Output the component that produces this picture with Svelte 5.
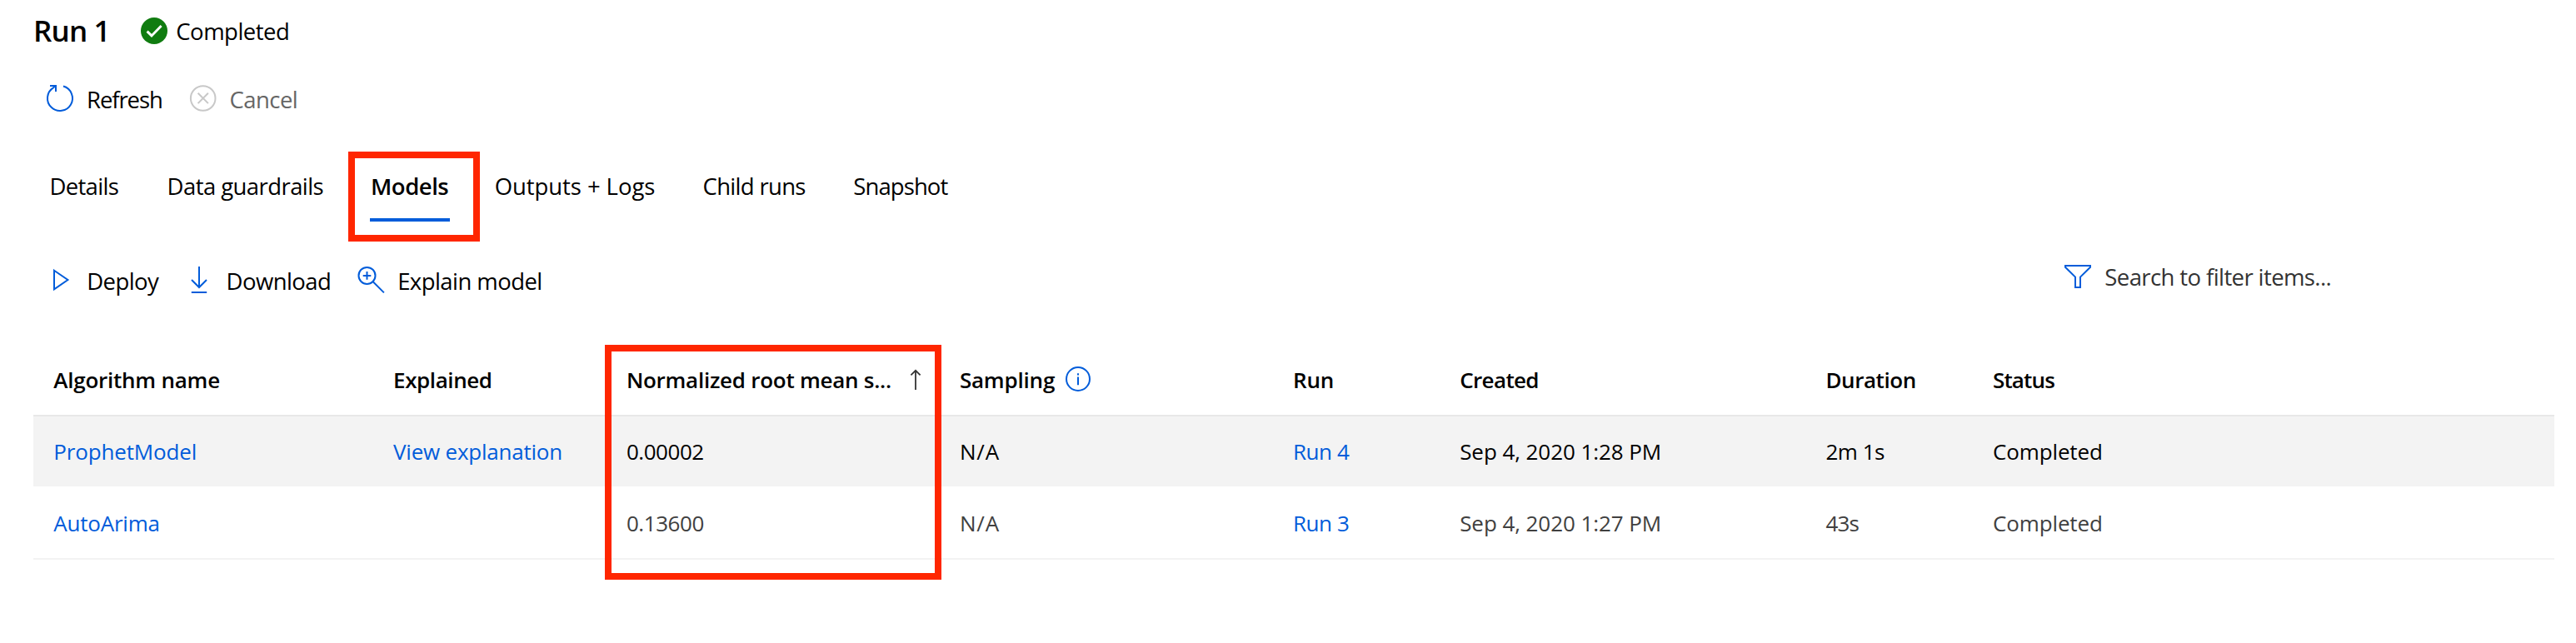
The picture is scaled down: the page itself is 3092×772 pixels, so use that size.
<script>
  const tabs = [
    { label: 'Details', ls: -0.68 },
    { label: 'Data guardrails', ls: -0.57 },
    { label: 'Models', ls: -0.47, active: true },
    { label: 'Outputs + Logs', ls: -0.07 },
    { label: 'Child runs', ls: -0.69 },
    { label: 'Snapshot', ls: -0.92 }
  ];

  const columns = [
    { label: 'Algorithm name', ls: -0.24 },
    { label: 'Explained', ls: -0.42 },
    { label: 'Normalized root mean s...', ls: -0.26, sorted: true },
    { label: 'Sampling', ls: -0.2, info: true },
    { label: 'Run', ls: -0.11 },
    { label: 'Created', ls: -0.64 },
    { label: 'Duration', ls: -0.44 },
    { label: 'Status', ls: -0.85 }
  ];

  const rows = [
    {
      selected: true,
      cells: [
        { text: 'ProphetModel', ls: -0.15, link: true },
        { text: 'View explanation', ls: -0.23, link: true },
        { text: '0.00002', ls: -0.46 },
        { text: 'N/A', ls: 0.89 },
        { text: 'Run 4', ls: -0.4, link: true },
        { text: 'Sep 4, 2020 1:28 PM', ls: -0.07 },
        { text: '2m 1s', ls: -0.49 },
        { text: 'Completed', ls: -0.13 }
      ]
    },
    {
      selected: false,
      cells: [
        { text: 'AutoArima', ls: -0.22, link: true },
        { text: '', ls: 0 },
        { text: '0.13600', ls: -0.43 },
        { text: 'N/A', ls: 0.89 },
        { text: 'Run 3', ls: -0.4, link: true },
        { text: 'Sep 4, 2020 1:27 PM', ls: -0.07 },
        { text: '43s', ls: -0.87 },
        { text: 'Completed', ls: -0.13 }
      ]
    }
  ];
</script>

<main class="page">
  <header class="title-row">
    <h1>Run 1</h1>
    <div class="status">
      <svg class="icon" viewBox="0 0 32 32">
        <circle cx="16" cy="16" r="16" fill="#107c10" />
        <path d="M7.6 16.6l5.4 5.3L24.6 10" fill="none" stroke="#fff" stroke-width="2.9" />
      </svg>
      <span class="status-text">Completed</span>
    </div>
  </header>

  <div class="toolbar run-actions">
    <svg class="icon line" viewBox="0 0 32 32">
      <path d="M20 1.55A15 15 0 1 1 8 3.3L11 1" />
      <path d="M4 1H11V8" />
    </svg>
    <span class="label refresh">Refresh</span>
    <svg class="icon line muted" viewBox="0 0 32 32">
      <circle cx="15.7" cy="16" r="14.8" />
      <path d="M9.6 9.8l12.3 12.3M21.9 9.8L9.6 22.1" />
    </svg>
    <span class="label cancel">Cancel</span>
  </div>

  <nav class="tabs">
    {#each tabs as tab}
      <div class="tab-slot">
        <span class="tab" class:active={tab.active}>
          <span style:letter-spacing="{tab.ls}px">{tab.label}</span>
          {#if tab.active}<i class="callout tab-callout"></i>{/if}
        </span>
      </div>
    {/each}
  </nav>

  <div class="toolbar model-actions">
    <svg class="icon line" viewBox="0 0 32 32">
      <path d="M9 4.7L25.4 16 9 27.3Z" />
    </svg>
    <span class="label">Deploy</span>
    <svg class="icon line" viewBox="0 0 32 32">
      <path d="M16 0V25M7 16l9 9 9-9M6.8 31H25.2" />
    </svg>
    <span class="label">Download</span>
    <svg class="icon line" viewBox="0 0 32 32">
      <circle cx="11.5" cy="10.9" r="10" />
      <path d="M6.7 10.9h9.6M11.5 6.1v9.6M18.5 18L31.9 31.4" />
    </svg>
    <span class="label">Explain model</span>
    <div class="filter">
      <svg class="filter-icon line" viewBox="0 0 32 28">
        <path d="M1 1H31V2.8L19 14.6V27H13V14.6L1 2.8Z" />
      </svg>
      <span class="placeholder">Search to filter items...</span>
    </div>
  </div>

  <section class="table">
    <div class="row head">
      {#each columns as col}
        <div class="cell">
          <span style:letter-spacing="{col.ls}px">{col.label}</span>
          {#if col.sorted}
            <svg class="sort" viewBox="0 0 14 26">
              <path d="M7 25V2M1.4 7.4L7 1.8l5.6 5.6" />
            </svg>
          {/if}
          {#if col.info}
            <svg class="info line" viewBox="0 0 30 30">
              <circle cx="15" cy="15" r="14" />
              <path d="M15 12.6V22.2M15 8.2V10.6" />
            </svg>
          {/if}
        </div>
      {/each}
    </div>
    {#each rows as row}
      <div class="row" class:selected={row.selected}>
        {#each row.cells as cell}
          <div class="cell" class:link={cell.link}>
            <span style:letter-spacing="{cell.ls}px">{cell.text}</span>
          </div>
        {/each}
      </div>
    {/each}
    <i class="callout column-callout"></i>
  </section>
</main>

<style>
  :global(body) {
    margin: 0;
    background: #fff;
  }

  .page {
    box-sizing: border-box;
    width: 3092px;
    height: 772px;
    overflow: hidden;
    background: #fff;
    color: #000;
    font-family: 'Open Sans', 'Noto Sans', sans-serif;
    font-size: 27.5px;
    line-height: 40px;
    white-space: nowrap;
  }

  svg {
    display: block;
    flex: none;
    overflow: visible;
  }

  .icon {
    width: 32px;
    height: 32px;
  }

  .line {
    fill: none;
    stroke: #015cda;
    stroke-width: 2;
  }

  .muted {
    stroke: #c8c8c8;
  }

  .title-row {
    display: flex;
    align-items: center;
    height: 74px;
    padding-left: 40px;
  }

  h1 {
    width: 129px;
    margin: 0 0 1px;
    font-size: 35px;
    font-weight: 600;
    letter-spacing: -0.85px;
  }

  .status {
    display: flex;
    align-items: center;
    gap: 10.3px;
  }

  .status-text {
    margin-top: 2px;
    letter-spacing: -0.51px;
  }

  .toolbar {
    display: grid;
    align-items: center;
    padding-left: 56px;
  }

  .run-actions {
    grid-template-columns: 48px 124px 47.6px auto;
    height: 88px;
  }

  .label {
    margin-top: 3px;
    letter-spacing: -0.57px;
  }

  .refresh {
    letter-spacing: -1.08px;
  }

  .cancel {
    color: #666;
  }

  .tabs {
    display: grid;
    grid-template-columns: 141.2px 244.2px 148.9px 249.9px 180.8px auto;
    height: 62px;
    padding: 42px 0 0 59.4px;
  }

  .tab {
    display: inline-block;
    position: relative;
    padding-bottom: 18px;
  }

  .active {
    width: 96px;
    margin-left: -0.8px;
    border-bottom: 4px solid #015cda;
    font-weight: 600;
  }

  .active > span {
    margin-left: 1px;
  }

  .callout {
    position: absolute;
    box-sizing: border-box;
    border: 8px solid #ff2600;
  }

  .tab-callout {
    left: -26px;
    top: -22px;
    width: 158px;
    height: 108px;
  }

  .model-actions {
    grid-template-columns: 48.2px 118.6px 48.8px 157.4px 48.2px 2000.8px auto;
    height: 140px;
  }

  .filter {
    display: flex;
    align-items: center;
    gap: 16.4px;
    margin-bottom: 8px;
    color: #333;
  }

  .filter-icon {
    width: 32px;
    height: 28px;
  }

  .placeholder {
    margin-top: 2px;
    letter-spacing: -0.6px;
  }

  .table {
    position: relative;
    width: 3026px;
    margin: 8px 0 0 40px;
    font-size: 26px;
  }

  .row {
    box-sizing: border-box;
    display: grid;
    grid-template-columns: 407.8px 279.8px 400px 400px 200.3px 439.3px 200.5px auto;
    align-items: center;
    height: 86px;
    padding-left: 24.3px;
    border-bottom: 2px solid #f3f3f3;
    color: #404040;
  }

  .head {
    border-bottom-color: #e8e8e8;
    color: #000;
    font-weight: 600;
  }

  .selected {
    border-bottom-color: #fff;
    background: #f3f3f3;
    background-clip: padding-box;
    color: #000;
  }

  .cell {
    display: flex;
    align-items: center;
  }

  .link {
    color: #015cda;
  }

  .sort {
    width: 14px;
    height: 26px;
    margin-left: 22px;
    fill: none;
    stroke: #333;
    stroke-width: 1.8;
  }

  .info {
    width: 30px;
    height: 30px;
    margin: 0 0 2px 13px;
  }

  .column-callout {
    left: 686px;
    top: 0;
    width: 404px;
    height: 282px;
  }
</style>
